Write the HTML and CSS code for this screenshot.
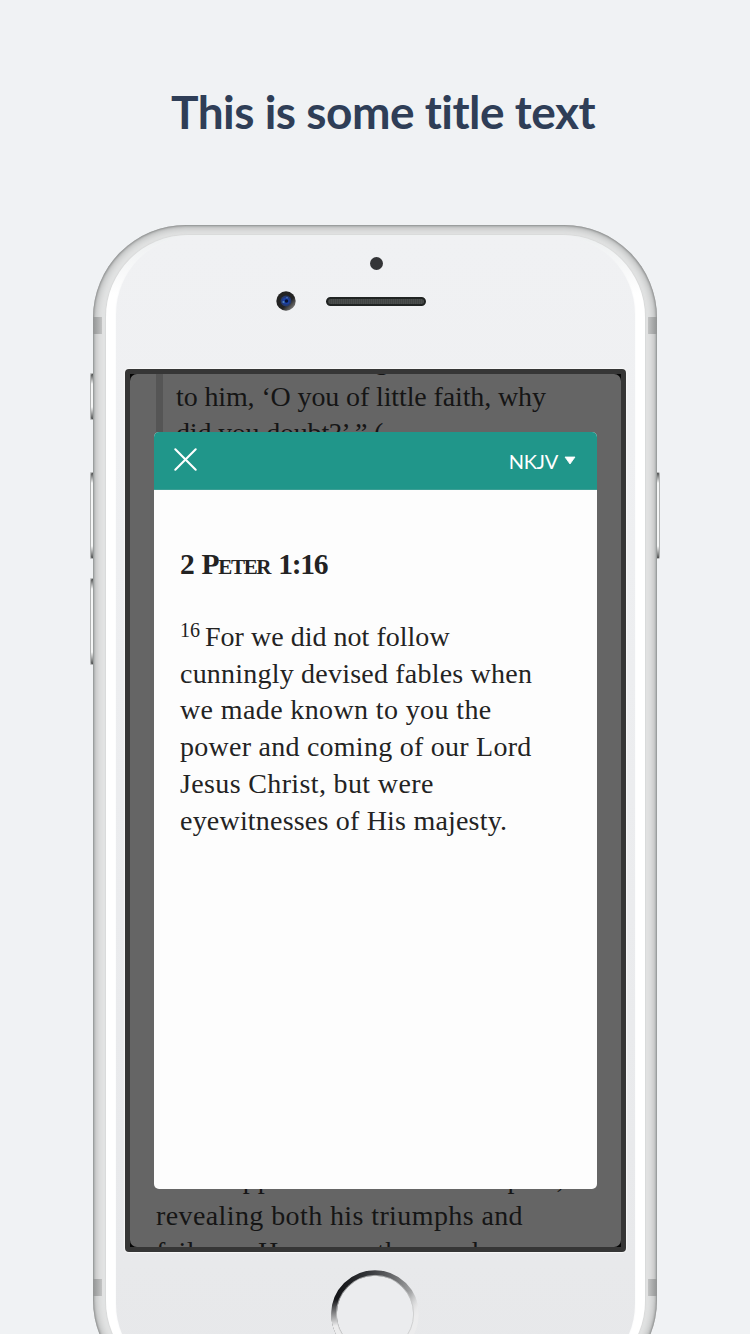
FILE: index.html
```html
<!DOCTYPE html>
<html lang="en">
<head>
<meta charset="utf-8">
<title>This is some title text</title>
<link rel="stylesheet" href="styles.css">
</head>
<body>
<main class="stage">
  <h1 class="title">This is some title text</h1>
  <div class="phone">
    <span class="key key-mute"></span>
    <span class="key key-up"></span>
    <span class="key key-down"></span>
    <span class="key key-power"></span>
    <div class="shell">
      <span class="band band-tl"></span><span class="band band-tr"></span>
      <span class="band band-bl"></span><span class="band band-br"></span>
      <div class="rim">
        <div class="face">
          <span class="sensor"></span>
          <div class="earpiece">
            <svg class="camera" viewBox="0 0 20 20">
              <defs><linearGradient id="lens" x1="0" y1="0" x2="1" y2="1"><stop offset=".6" stop-color="#232323"/><stop offset="1" stop-color="#a2a2a2"/></linearGradient></defs>
              <circle cx="10" cy="10" r="9.7" fill="url(#lens)"/>
              <circle cx="10" cy="10" r="5.4" fill="#24396f"/>
              <circle cx="10" cy="10" r="3.6" fill="#1a3fa2"/>
              <circle cx="10.5" cy="10" r="1.8" fill="#071334"/>
              <circle cx="7.5" cy="11" r="1.1" fill="#5485bd"/>
              <circle cx="11" cy="6.8" r=".8" fill="#567ac0"/>
            </svg>
            <span class="speaker"></span>
          </div>
          <div class="screen">
            <div class="page">
              <div class="quote">
                <p class="line q0">said unto him again</p>
                <p class="line q1">to him, ‘O you of little faith, why</p>
                <p class="line q2">did you doubt?’ ” (</p>
              </div>
              <div class="article">
                <p class="line a1">Bible appears for these examples,</p>
                <p class="line a2">revealing both his triumphs and</p>
                <p class="line a3">failures. However, the words</p>
              </div>
            </div>
            <section class="modal">
              <header class="bar">
                <svg class="close" viewBox="0 0 24 24"><path d="M2.2 2.2 21.8 21.8M21.8 2.2 2.2 21.8"/></svg>
                <span class="version">NKJV<svg class="caret" viewBox="0 0 12 8"><path d="M1 .5h10L6 7.5z"/></svg></span>
              </header>
              <div class="passage">
                <h2 class="ref">2 Peter 1:16</h2>
                <p class="line v1"><sup class="num">16</sup><span>For we did not follow</span></p>
                <p class="line v2">cunningly devised fables when</p>
                <p class="line v3">we made known to you the</p>
                <p class="line v4">power and coming of our Lord</p>
                <p class="line v5">Jesus Christ, but were</p>
                <p class="line v6">eyewitnesses of His majesty.</p>
              </div>
            </section>
          </div>
          <svg class="home" viewBox="0 0 88 88">
            <defs><linearGradient id="ring" gradientUnits="userSpaceOnUse" x1="8" y1="20" x2="86" y2="40"><stop offset="0" stop-color="#151619"/><stop offset=".3" stop-color="#34363a"/><stop offset=".65" stop-color="#707173"/><stop offset=".88" stop-color="#a5a6a7"/><stop offset="1" stop-color="#e2e3e4"/></linearGradient>
            <linearGradient id="fade" gradientUnits="userSpaceOnUse" x1="0" y1="30" x2="3" y2="56"><stop offset="0" stop-color="#ececed" stop-opacity="0"/><stop offset="1" stop-color="#ececed"/></linearGradient></defs>
            <circle cx="44" cy="44" r="41" fill="#ebecee" stroke="url(#ring)" stroke-width="5.6"/>
            <circle cx="44" cy="44" r="41" fill="none" stroke="url(#fade)" stroke-width="5.8"/>
            <circle cx="44" cy="44" r="38.6" fill="none" stroke="#c4c5c6" stroke-width=".7"/>
          </svg>
        </div>
      </div>
    </div>
  </div>
</main>
</body>
</html>
```
FILE: styles.css
```css
* { box-sizing: border-box; margin: 0; padding: 0; }
body { background: #f0f2f4; }
.stage { width: 750px; height: 1334px; overflow: hidden; background: #f0f2f4; }
.title { height: 225px; padding: 84px 0 0 16px; text-align: center; font: 700 46px/56px Lato, sans-serif; font-variant-ligatures: none; letter-spacing: -.5px; color: #2f3e57; white-space: nowrap; }

.phone { position: relative; width: 564px; height: 1168px; margin-left: 93px; }
.shell { position: relative; height: 100%; padding: 10px 12.5px; overflow: hidden; border-radius: 93px; background: #e3e4e4; box-shadow: inset 0 0 2px 1px #8f9191, inset 0 0 9px 2px #a9abab; }
.rim { height: 100%; padding: 1px 10px; border-radius: 82px; background: linear-gradient(#eef0f1 4px, #fff 60px); box-shadow: 0 0 1px 1px #d9dada; }
.face { display: flex; flex-direction: column; align-items: center; height: 100%; border-radius: 78px; background: linear-gradient(#f0f1f3, #eff0f2 200px, #e7e8ea); box-shadow: 0 0 2px #f4f5f6; }

.key { position: absolute; left: -3px; width: 5px; border: 1px solid #b1b3b3; border-right: 0; border-radius: 2px 0 0 2px; background: linear-gradient(#4e5050, #f5f6f6 10px, #f5f6f6 calc(100% - 12px), #4e5050); }
.key-mute { top: 148px; height: 47px; }
.key-up { top: 247px; height: 87px; }
.key-down { top: 353px; height: 87px; }
.key-power { top: 247px; height: 87px; left: 562px; border: 1px solid #b1b3b3; border-left: 0; border-radius: 0 2px 2px 0; }
.band { position: absolute; width: 9px; height: 17px; }
.band-tl, .band-bl { left: 0; background: linear-gradient(90deg, #929494, #c2c3c3); }
.band-tr, .band-br { right: 0; background: linear-gradient(270deg, #929494, #c2c3c3); }
.band-tl, .band-tr { top: 92px; }
.band-bl, .band-br { top: 1054px; }

.sensor { flex: none; width: 13px; height: 13px; margin: 21px 0 0 2px; border-radius: 50%; background: #343537; }
.earpiece { display: flex; align-items: center; align-self: flex-start; gap: 30px; height: 20px; margin: 21px 0 0 160px; }
.camera { width: 20px; height: 20px; }
.speaker { width: 100px; height: 9px; border: 2px solid #202322; border-radius: 5px; background: repeating-linear-gradient(90deg, #414443 0 1px, #4b4e4d 1px 2px); }

.screen { position: relative; flex: none; width: 501px; height: 883px; margin: 58px 0 0 1px; border: 5px solid #363636; border-radius: 4px; background: #050505; box-shadow: 0 0 1px 1px #f8f8f8; }
.page { display: flex; flex-direction: column; justify-content: space-between; height: 873px; overflow: hidden; border-radius: 7px; background: #656565; color: #151515; }
.quote { height: 100px; margin-left: 26px; padding-left: 13px; border-left: 7px solid #555; }
.article { height: 63px; padding-left: 26px; }
.line { font: 28px/36.7px "Liberation Serif", serif; white-space: nowrap; }
.q0 { margin-top: -32px; padding-left: 18px; letter-spacing: .6px; }
.q1 { letter-spacing: -.12px; }
.q2 { letter-spacing: -.2px; }
.a1 { margin-top: -23px; letter-spacing: .95px; }
.a2 { letter-spacing: .4px; }
.a3 { letter-spacing: .4px; }

.modal { position: absolute; left: 24px; top: 58px; width: 443px; height: 757px; overflow: hidden; border-radius: 5px; background: #fdfdfd; color: #232323; }
.bar { display: flex; align-items: center; justify-content: space-between; height: 58px; padding: 0 21px 0 19px; border-bottom: 1px solid #3b9e94; background: #20968a; color: #fff; }
.close { width: 25px; height: 25px; margin-top: -2px; fill: none; stroke: #fff; stroke-width: 2; stroke-linecap: round; }
.version { display: flex; align-items: center; gap: 6px; font: 20px/24px Lato, sans-serif; letter-spacing: -.3px; }
.caret { width: 12px; height: 9px; margin-top: -1px; fill: #fff; stroke: #fff; stroke-width: .8; stroke-linejoin: round; }
.passage { padding: 56px 0 0 26px; }
.ref { height: 73px; font: 700 29.5px/36px "Liberation Serif", serif; font-variant: small-caps; letter-spacing: -1.3px; word-spacing: 2px; }
.v1 { letter-spacing: .02px; }
.num { margin-right: 5px; font-size: 20px; line-height: 0; letter-spacing: 0; vertical-align: 9px; }
.v2 { letter-spacing: .21px; }
.v3 { letter-spacing: .38px; }
.v4 { letter-spacing: .25px; }
.v5 { letter-spacing: .36px; }
.v6 { letter-spacing: .2px; }

.home { flex: none; width: 88px; height: 88px; margin-top: 18px; }
```
